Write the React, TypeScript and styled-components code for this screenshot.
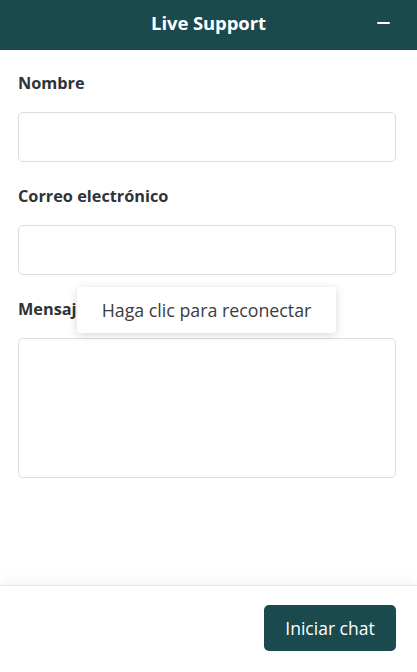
import styled, { createGlobalStyle } from "styled-components";

const GlobalStyle = createGlobalStyle`
  html, body {
    margin: 0;
    padding: 0;
    background: #ffffff;
  }
  * {
    box-sizing: border-box;
  }
`;

const Widget = styled.div`
  position: relative;
  display: flex;
  flex-direction: column;
  width: 417px;
  height: 672px;
  font-family: "Open Sans", "Noto Sans", sans-serif;
  color: #2b2f33;
  background: #ffffff;
`;

const Header = styled.div`
  display: flex;
  align-items: center;
  justify-content: center;
  position: relative;
  height: 50px;
  padding-bottom: 5px;
  flex-shrink: 0;
  background: #1a4a4d;
  color: #ffffff;
`;

const Title = styled.h1`
  margin: 0;
  font-size: 18.5px;
  font-weight: 700;
  letter-spacing: -0.1px;
`;

const MinimizeButton = styled.button`
  position: absolute;
  right: 24px;
  top: 13px;
  width: 20px;
  height: 20px;
  padding: 0;
  border: none;
  background: transparent;
  cursor: pointer;
  display: flex;
  align-items: center;
  justify-content: center;

  &::before {
    content: "";
    display: block;
    width: 13px;
    height: 2px;
    background: #ffffff;
    border-radius: 1px;
  }
`;

const Form = styled.div`
  flex: 1;
  display: flex;
  flex-direction: column;
  padding: 21px 21px 0 18px;
`;

const Field = styled.div`
  display: flex;
  flex-direction: column;
  margin-bottom: 22px;
`;

const Label = styled.label`
  font-size: 16.3px;
  font-weight: 700;
  line-height: 24px;
  color: #2f3337;
  margin-bottom: 17px;
`;

const Input = styled.input`
  height: 50px;
  width: 100%;
  border: 1px solid #dcdcdc;
  border-radius: 5px;
  padding: 0 12px;
  font-family: inherit;
  font-size: 16px;
  outline: none;
`;

const TextArea = styled.textarea`
  height: 140px;
  width: 100%;
  border: 1px solid #dcdcdc;
  border-radius: 5px;
  padding: 10px 12px;
  font-family: inherit;
  font-size: 16px;
  resize: none;
  outline: none;
`;

const Footer = styled.div`
  flex-shrink: 0;
  height: 87px;
  display: flex;
  justify-content: flex-end;
  align-items: flex-start;
  padding: 19px 21px 0 0;
  border-top: 1px solid #e6e6e6;
  box-shadow: 0 -6px 10px rgba(0, 0, 0, 0.035);
`;

const StartButton = styled.button`
  width: 132px;
  height: 46px;
  border: none;
  border-radius: 5px;
  background: #1a4a4d;
  color: #ffffff;
  font-family: inherit;
  font-size: 17.5px;
  cursor: pointer;
`;

const Toast = styled.div`
  position: absolute;
  left: 77px;
  top: 287px;
  width: 259px;
  height: 46px;
  display: flex;
  align-items: center;
  justify-content: center;
  background: #ffffff;
  border-radius: 4px;
  box-shadow: 0 2px 10px rgba(0, 0, 0, 0.16);
  font-size: 17.8px;
  color: #3a3d40;
`;

const App = () => {
  return (
    <>
      <GlobalStyle />
      <Widget>
        <Header>
          <Title>Live Support</Title>
          <MinimizeButton aria-label="Minimizar" />
        </Header>
        <Form>
          <Field>
            <Label>Nombre</Label>
            <Input type="text" />
          </Field>
          <Field>
            <Label>Correo electrónico</Label>
            <Input type="email" />
          </Field>
          <Field>
            <Label>Mensaje</Label>
            <TextArea />
          </Field>
        </Form>
        <Footer>
          <StartButton>Iniciar chat</StartButton>
        </Footer>
        <Toast>Haga clic para reconectar</Toast>
      </Widget>
    </>
  );
};

export default App;
